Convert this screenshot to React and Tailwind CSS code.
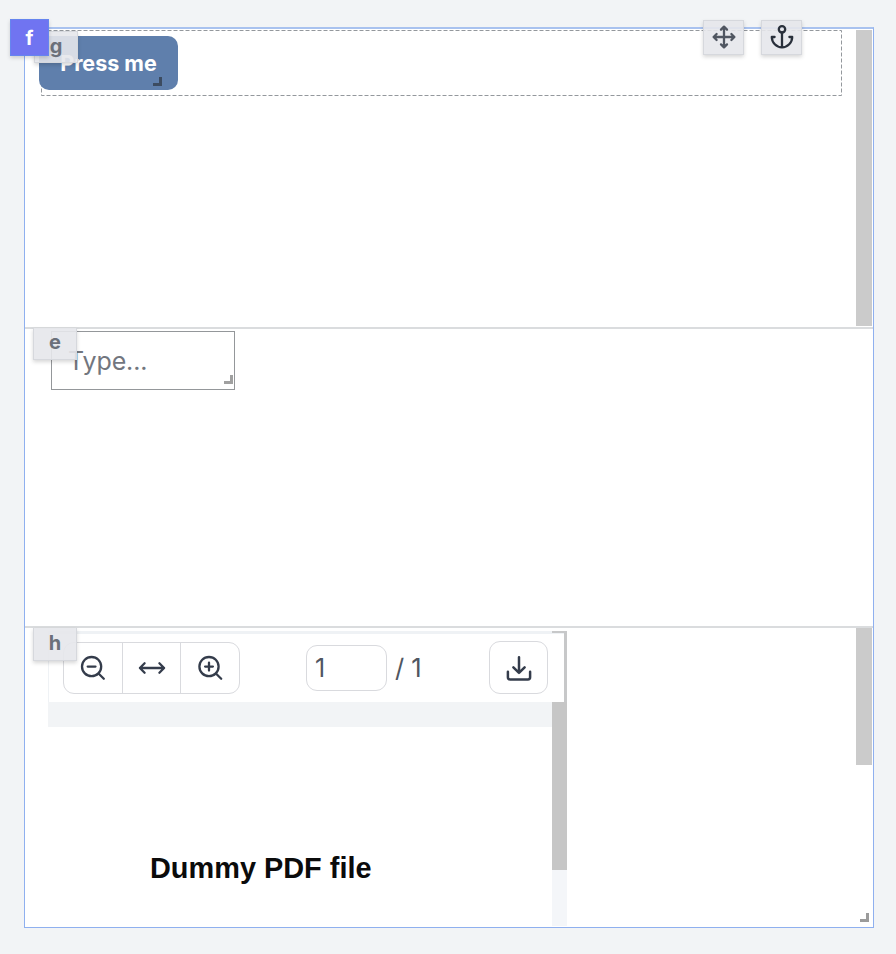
import React from "react";

const tag =
  "absolute flex items-center justify-center border border-[#d6d8dd] bg-[#e5e7eb]/90 font-bold text-[#6b707a] text-[20px] leading-none shadow-[0_2px_4px_rgba(0,0,0,0.16)]";

function Icon({ size = 28, width = 2, className = "", children }) {
  return (
    <svg
      width={size}
      height={size}
      viewBox={`0 0 ${size} ${size}`}
      fill="none"
      stroke="currentColor"
      strokeWidth={width}
      strokeLinecap="round"
      strokeLinejoin="round"
      className={`shrink-0 ${className}`}
    >
      {children}
    </svg>
  );
}

function Grip({ className }) {
  return <span className={`absolute h-[9px] w-[9px] border-r-[3px] border-b-[3px] ${className}`} />;
}

function ButtonSection() {
  return (
    <section className="relative flex h-[300px] justify-between border-b-2 border-[#dadcde] pr-px">
      <div className="relative mt-[1px] ml-[16px] h-[66px] w-[801px]">
        <svg className="absolute inset-0" width="801" height="66" fill="none">
          <rect x="0.5" y="0.5" width="800" height="65" stroke="#94989d" strokeDasharray="4 2" />
        </svg>
        <button className="relative mt-[6px] -ml-[2px] flex h-[54px] w-[139px] items-center justify-center rounded-[10px] bg-[#5f7fac] text-[21.5px] font-bold text-white">
          Press me
          <Grip className="right-[16px] bottom-[4px] border-[#3c4b60]" />
        </button>
      </div>
      <div className="mt-[1px] h-[296px] w-[16px] bg-[#cbcbcb]" />
      <div className={`${tag} top-[2px] left-[9px] h-[32px] w-[44px]`}>
        <span className="-mt-[2px]">g</span>
      </div>
    </section>
  );
}

function InputSection() {
  return (
    <section className="relative h-[299px] border-b-2 border-[#dadcde] pt-[2px] pl-[26px]">
      <div className="relative flex h-[59px] w-[184px] items-center border border-[#94979a] pl-[16px] text-[25px] text-[#72767e]">
        <span className="mt-[3px] tracking-[-0.1px]">Type...</span>
        <Grip className="right-[1px] bottom-[5px] border-[#a0a0a0]" />
      </div>
      <div className={`${tag} top-[-1px] left-[8px] h-[32px] w-[44px] border-t-0`}>
        <span className="-mt-[3px]">e</span>
      </div>
    </section>
  );
}

function PdfToolbar() {
  return (
    <div className="flex h-[71px] w-[516px] border-t-[3px] border-l border-[#eff2f5] bg-white text-[#343c4b]">
      <div className="mt-[8px] ml-[14px] flex h-[52px] w-[177px] divide-x divide-[#d9dade] rounded-[11px] border border-[#d9dade]">
        <div className="flex flex-1 items-center justify-center">
          <Icon width={2.3}>
            <circle cx="12.6" cy="12.6" r="9.6" />
            <path d="M19.5 19.5 24.8 24.8M8.7 12.6h7.8" />
          </Icon>
        </div>
        <div className="flex flex-1 items-center justify-center">
          <Icon width={2.3}>
            <path d="M2 14h24M6.6 9.3 1.9 14l4.7 4.7M21.4 9.3l4.7 4.7-4.7 4.7" />
          </Icon>
        </div>
        <div className="flex flex-1 items-center justify-center">
          <Icon width={2.3}>
            <circle cx="13" cy="12.6" r="9.6" />
            <path d="M19.9 19.5 25.2 24.8M9.1 12.6h7.8M13 8.7v7.8" />
          </Icon>
        </div>
      </div>
      <div className="mt-[11px] ml-[66px] flex h-[46px] w-[81px] items-center rounded-[11px] border border-[#d9dade] pt-[2px] pl-[8px] text-[25px] text-[#505661]">
        1
      </div>
      <div className="mt-[11px] ml-[8px] flex h-[46px] w-[94px] items-center text-[25.5px] text-[#505661]">/ 1</div>
      <div className="mt-[7px] flex h-[53px] w-[59px] items-center justify-center rounded-[11px] border border-[#d9dade]">
        <Icon width={2.5}>
          <path d="M14 3.2v15.6M8.4 13.3l5.6 5.6 5.6-5.6M2.9 17.8v5.4q0 2.2 2.2 2.2h17.8q2.2 0 2.2-2.2v-5.4" />
        </Icon>
      </div>
    </div>
  );
}

function PdfSection() {
  return (
    <section className="relative flex h-[298px] justify-between pr-px">
      <div className="mt-[3px] ml-[23px] h-[295px] w-[519px]">
        <div className="relative flex justify-between bg-[#c7c8c9]">
          <PdfToolbar />
          <span className="absolute top-0 right-0 h-[2px] w-[15px] bg-[#c7c8c9]" />
        </div>
        <div className="flex h-[224px]">
          <div className="flex-1">
            <div className="h-[25px] bg-[#f2f4f6]" />
            <p className="mt-[123px] ml-[102px] w-[223px] whitespace-nowrap font-['Liberation_Sans',Arial,sans-serif] text-[28.9px] leading-[36px] font-bold text-[#0b0b0b]">
              Dummy PDF file
            </p>
          </div>
          <div className="w-[15px] bg-[#f4f6f9]">
            <div className="h-[168px] bg-[#c6c6c6]" />
          </div>
        </div>
      </div>
      <div className="h-[137px] w-[16px] bg-[#cbcbcb]" />
      <Grip className="right-[4px] bottom-[4px] border-[#9b9b9b]" />
      <div className={`${tag} top-0 left-[8px] h-[33px] w-[44px] border-t-0`}>
        <span className="-mt-[2px]">h</span>
      </div>
    </section>
  );
}

export default function App() {
  return (
    <div className="relative h-[954px] w-[896px] overflow-hidden bg-[#f2f4f6] pt-[27px] pl-[24px] font-[Inter,sans-serif]">
      <main className="h-[901px] w-[850px] border border-t-2 border-[#8fb0ef] border-t-[#a9c2ef] bg-white">
        <ButtonSection />
        <InputSection />
        <PdfSection />
      </main>
      <div className="absolute top-[19px] left-[10px] flex h-[37px] w-[39px] items-center justify-center border border-[#6685ef] bg-[#7074f1] text-[20px] font-bold text-white shadow-[0_2px_4px_rgba(0,0,0,0.16)]">
        f
      </div>
      <div className={`${tag} top-[20px] left-[703px] h-[35px] w-[41px]`}>
        <Icon size={26} width={2.3} className="-mt-px text-[#505661]">
          <path d="M13 2.8v20.4M2.8 13h20.4M10 5.6 13 2.6l3 3M10 20.4l3 3 3-3M5.6 10 2.6 13l3 3M20.4 10l3 3-3 3" />
        </Icon>
      </div>
      <div className={`${tag} top-[20px] left-[761px] h-[35px] w-[41px]`}>
        <Icon size={26} width={2.3} className="-mt-px text-[#29303b]">
          <circle cx="13" cy="5.3" r="3.2" />
          <path d="M13 8.5V23.3M5.6 13H2.8a10.2 10.3 0 0 0 20.4 0h-2.8" />
        </Icon>
      </div>
    </div>
  );
}
